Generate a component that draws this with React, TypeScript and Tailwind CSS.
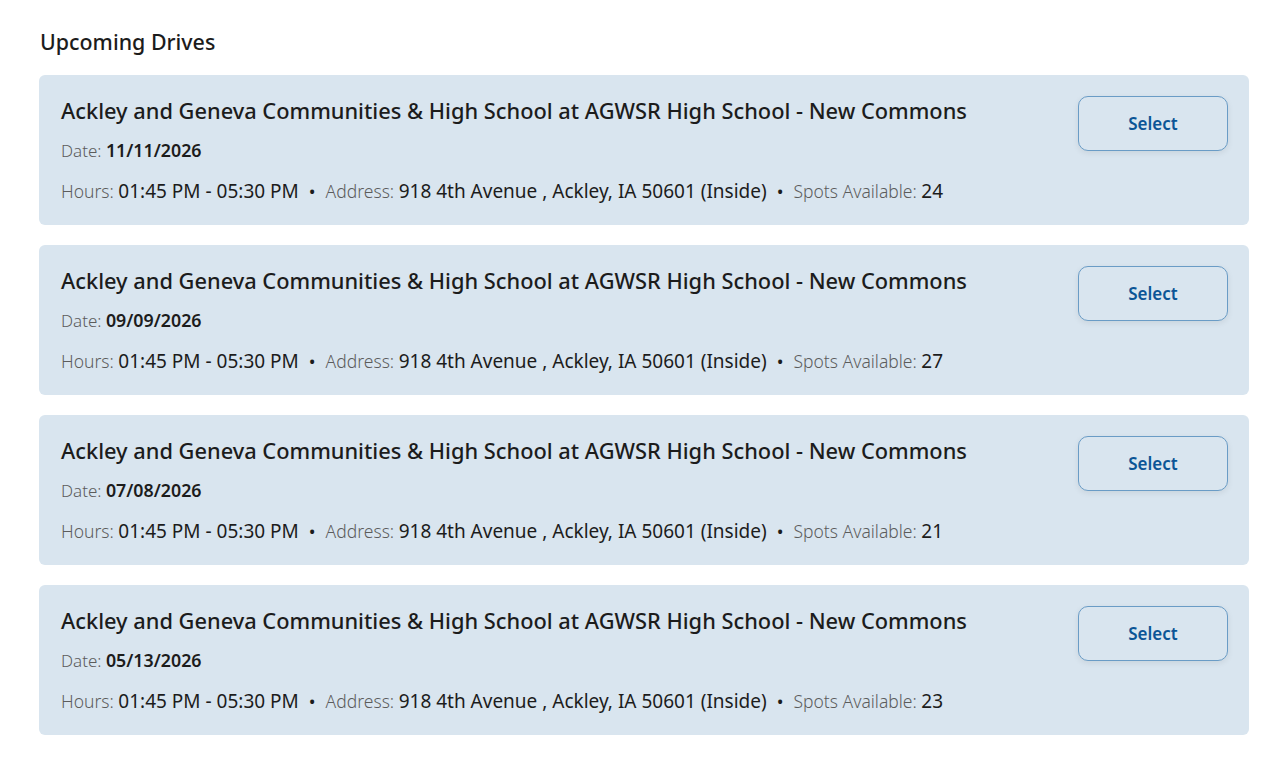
const drives = [
  { date: '11/11/2026', spots: 24 },
  { date: '09/09/2026', spots: 27 },
  { date: '07/08/2026', spots: 21 },
  { date: '05/13/2026', spots: 23 },
]

function DriveCard({ date, spots }: { date: string; spots: number }) {
  return (
    <div className="flex justify-between items-start rounded-md bg-[#d9e5ef] h-[150px] pl-[22px] pr-[21px] pt-[21px]">
      <div className="flex flex-col">
        <h3 className="text-[21.8px] leading-[30px] font-medium text-[#1c1c1c]">
          Ackley and Geneva Communities &amp; High School at AGWSR High School - New Commons
        </h3>
        <div className="mt-[11px] text-[17px] leading-[26px]">
          <span className="font-light text-[#5c5c5c]">Date: </span>
          <span className="text-[17.8px] font-semibold text-[#1c1c1c]">{date}</span>
        </div>
        <div className="mt-[14px] text-[17.5px] leading-[26px] text-[#1c1c1c]">
          <span className="font-light text-[#5c5c5c]">Hours: </span>
          <span className="text-[19px]">01:45 PM - 05:30 PM</span>
          <span className="mx-[10px] text-[18px]">•</span>
          <span className="font-light text-[#5c5c5c]">Address: </span>
          <span className="text-[19px]">918 4th Avenue , Ackley, IA 50601 (Inside)</span>
          <span className="mx-[10px] text-[18px]">•</span>
          <span className="font-light text-[#5c5c5c]">Spots Available: </span>
          <span className="text-[19px]">{spots}</span>
        </div>
      </div>
      <button className="w-[150px] h-[55px] shrink-0 rounded-[10px] border border-[#6a9cc6] bg-[#d9e5ef] shadow-[0_2px_6px_rgba(0,0,0,0.08)] text-[17px] font-semibold text-[#0b5596]">
        Select
      </button>
    </div>
  )
}

export default function App() {
  return (
    <div className="bg-white min-h-screen pl-[39px] pr-[33px] pt-[28px] font-['Noto_Sans',sans-serif]">
      <h2 className="ml-[1px] text-[21.4px] leading-[28px] font-medium text-[#1c1c1c]">Upcoming Drives</h2>
      <div className="mt-[19px] flex flex-col gap-[20px]">
        {drives.map((d) => (
          <DriveCard key={d.date} date={d.date} spots={d.spots} />
        ))}
      </div>
    </div>
  )
}
